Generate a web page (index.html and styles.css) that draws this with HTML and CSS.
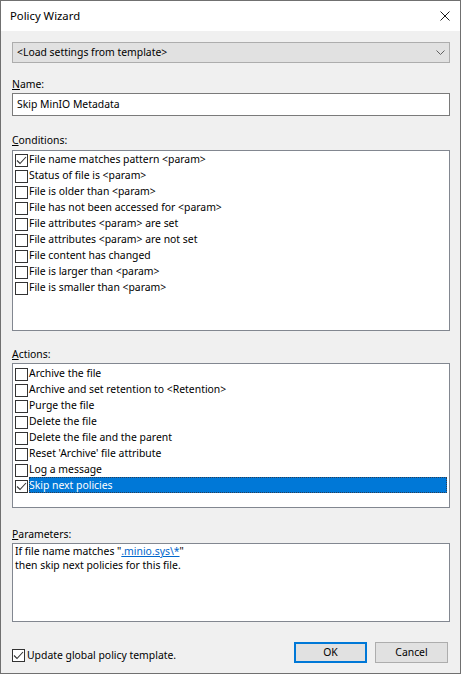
FILE: index.html
```html
<!DOCTYPE html>
<html>
<head>
<meta charset="utf-8">
<link rel="stylesheet" href="styles.css">
</head>
<body>
<div class="window">
  <div class="titlebar">
    <span class="title">Policy Wizard</span>
    <svg class="close" width="10" height="10" viewBox="0 0 10 10"><path d="M0.5 0.5 L9.5 9.5 M9.5 0.5 L0.5 9.5" stroke="#1a1a1a" stroke-width="1" fill="none"/></svg>
  </div>
  <div class="content">
    <div class="combo">
      <span class="combo-text">&lt;Load settings from template&gt;</span>
      <svg class="chev" width="9" height="5" viewBox="0 0 9 5"><path d="M0.5 0.5 L4.5 4.5 L8.5 0.5" stroke="#606060" stroke-width="1" fill="none"/></svg>
    </div>

    <div class="label label-name"><u>N</u>ame:</div>
    <div class="textbox">Skip MinIO Metadata</div>

    <div class="label label-cond"><u>C</u>onditions:</div>
    <div class="listbox list-cond">
      <div class="item"><span class="cb checked"><svg width="11" height="11" viewBox="0 0 11 11"><path d="M1 5.5 L4 8.5 L10 2" stroke="#333" stroke-width="1.1" fill="none"/></svg></span><span class="txt">File name matches pattern &lt;param&gt;</span></div>
      <div class="item"><span class="cb"></span><span class="txt">Status of file is &lt;param&gt;</span></div>
      <div class="item"><span class="cb"></span><span class="txt">File is older than &lt;param&gt;</span></div>
      <div class="item"><span class="cb"></span><span class="txt">File has not been accessed for &lt;param&gt;</span></div>
      <div class="item"><span class="cb"></span><span class="txt">File attributes &lt;param&gt; are set</span></div>
      <div class="item"><span class="cb"></span><span class="txt">File attributes &lt;param&gt; are not set</span></div>
      <div class="item"><span class="cb"></span><span class="txt">File content has changed</span></div>
      <div class="item"><span class="cb"></span><span class="txt">File is larger than &lt;param&gt;</span></div>
      <div class="item"><span class="cb"></span><span class="txt">File is smaller than &lt;param&gt;</span></div>
    </div>

    <div class="label label-act"><u>A</u>ctions:</div>
    <div class="listbox list-act">
      <div class="item"><span class="cb"></span><span class="txt">Archive the file</span></div>
      <div class="item"><span class="cb"></span><span class="txt">Archive and set retention to &lt;Retention&gt;</span></div>
      <div class="item"><span class="cb"></span><span class="txt">Purge the file</span></div>
      <div class="item"><span class="cb"></span><span class="txt">Delete the file</span></div>
      <div class="item"><span class="cb"></span><span class="txt">Delete the file and the parent</span></div>
      <div class="item"><span class="cb"></span><span class="txt">Reset 'Archive' file attribute</span></div>
      <div class="item"><span class="cb"></span><span class="txt">Log a message</span></div>
      <div class="item selected"><span class="cb checked"><svg width="11" height="11" viewBox="0 0 11 11"><path d="M1 5.5 L4 8.5 L10 2" stroke="#333" stroke-width="1.1" fill="none"/></svg></span><span class="txt">Skip next policies</span></div>
    </div>

    <div class="label label-par"><u>P</u>arameters:</div>
    <div class="params">
      <div>If file name matches "<span class="link">.minio.sys\*</span>"</div>
      <div>then skip next policies for this file.</div>
    </div>

    <div class="footer">
      <div class="chk"><span class="cb checked"><svg width="11" height="11" viewBox="0 0 11 11"><path d="M1 5.5 L4 8.5 L10 2" stroke="#333" stroke-width="1.1" fill="none"/></svg></span><span class="chk-text">Update global policy template.</span></div>
      <div class="buttons">
        <div class="btn btn-default">OK</div>
        <div class="btn">Cancel</div>
      </div>
    </div>
  </div>
</div>
</body>
</html>
```

FILE: styles.css
```css
* { box-sizing: border-box; }
html, body { margin: 0; padding: 0; background: #f0f0f0; }
body {
  font-family: "Noto Sans", "Liberation Sans", sans-serif;
  font-size: 10.4px;
  color: #000;
}
.window {
  width: 461px;
  height: 674px;
  border: 1px solid #707070;
  background: #f0f0f0;
  display: flex;
  flex-direction: column;
}
.titlebar {
  height: 30px;
  background: #fff;
  display: flex;
  align-items: center;
  justify-content: space-between;
  padding: 0 10px 0 9px;
}
.title {
  font-size: 11.3px;
  line-height: 30px;
  color: #000;
}
.close { display: block; }
.content {
  flex: 1;
  padding: 11px 10px 10px 11px;
  display: flex;
  flex-direction: column;
}
.combo {
  height: 21px;
  background: #e1e1e1;
  border: 1px solid #adadad;
  display: flex;
  align-items: center;
  justify-content: space-between;
  padding: 0 4px 0 4px;
}
.combo-text { line-height: 19px; }
.chev { display: block; margin-right: 0; }
.label { line-height: 14px; margin-bottom: 2px; }
.label-name { margin-top: 14px; }
.label-cond { margin-top: 17px; margin-bottom: 3px; }
.label-act { margin-top: 16px; }
.label-par { margin-top: 19px; }
.textbox {
  height: 23px;
  background: #fff;
  border: 1px solid #7a7a7a;
  line-height: 19px;
  padding: 1px 4px 0;
}
.listbox {
  background: #fff;
  border: 1px solid #828790;
}
.list-cond { height: 181px; padding-top: 0; }
.list-act { height: 145px; padding-top: 1px; }
.item {
  height: 16px;
  display: flex;
  align-items: flex-end;
  padding-left: 2px;
  padding-right: 2px;
}
.cb {
  width: 13px;
  height: 13px;
  border: 1px solid #333;
  background: #fff;
  flex: none;
  display: flex;
  align-items: center;
  justify-content: center;
}
.cb svg { display: block; }
.txt {
  flex: 1;
  height: 16px;
  line-height: 16px;
  margin-left: 1px;
  white-space: nowrap;
}
.selected .txt {
  background: #0078d7;
  color: #fff;
  outline: 1px dotted #2b3e55;
  outline-offset: -1px;
}
.params {
  height: 79px;
  background: #fff;
  border: 1px solid #828790;
  line-height: 14px;
  padding: 0 2px;
}
.link {
  color: #0066cc;
  text-decoration: underline;
}
.footer {
  margin-top: 20px;
  display: flex;
  justify-content: space-between;
  align-items: flex-end;
}
.chk {
  display: flex;
  align-items: center;
  height: 16px;
}
.chk-text { line-height: 16px; margin-left: 2px; }
.buttons {
  display: flex;
  gap: 8px;
  margin-right: 2px;
}
.btn {
  width: 73px;
  height: 21px;
  background: #e1e1e1;
  border: 1px solid #adadad;
  text-align: center;
  line-height: 19px;
}
.btn-default {
  border: 2px solid #0078d7;
  line-height: 17px;
}
```
